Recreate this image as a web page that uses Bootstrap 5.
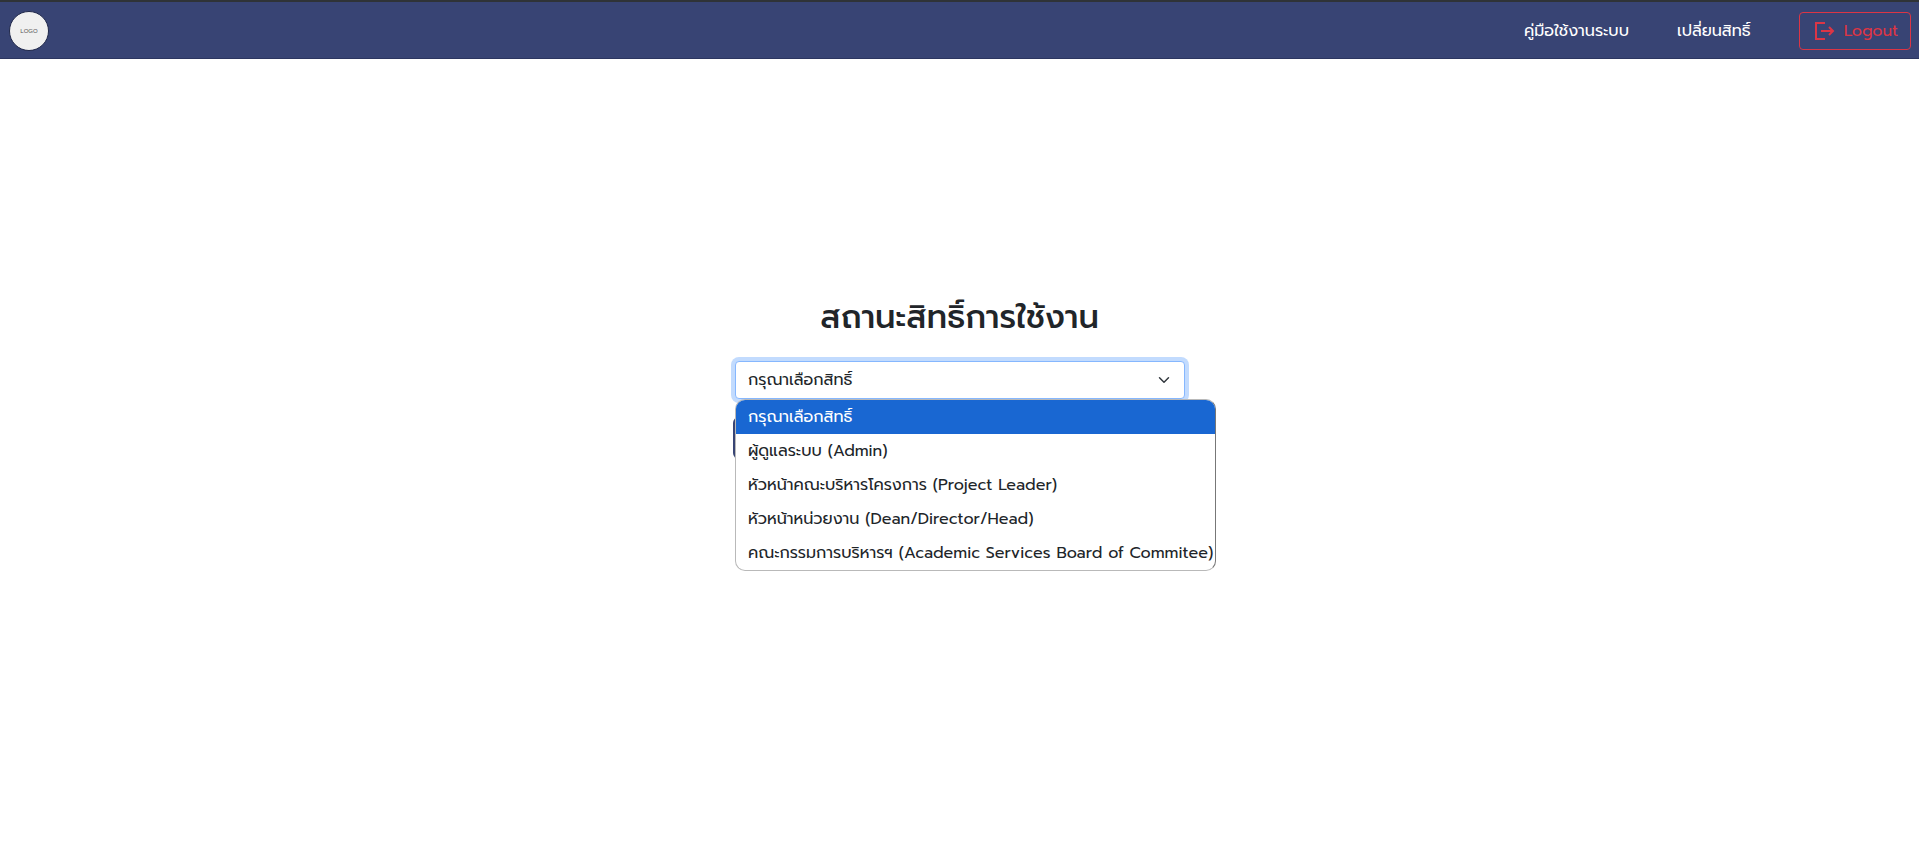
<!DOCTYPE html>
<html lang="th">
<head>
<meta charset="utf-8">
<meta name="viewport" content="width=device-width, initial-scale=1">
<title>สถานะสิทธิ์การใช้งาน</title>
<link href="https://cdn.jsdelivr.net/npm/bootstrap@5.3.0/dist/css/bootstrap.min.css" rel="stylesheet">
<style>
  body { font-family: Prompt, "Noto Sans", "Noto Sans Thai", sans-serif; }
  .topbar { background: #384474; border-top: 2px solid #2f3337; border-bottom: 1px solid #2c3660; padding: 9px 8px 7px 9px; }
  .logo-link { width: 40px; height: 40px; background: #f0f0f0; border: 1px solid #20284a; color: #555; font: 6px "Liberation Sans", sans-serif; }
  .top-link { color: #fff; }
  .menu-gap { gap: 48px; }
  .logout { padding: 6px 12px; gap: 8px; border-radius: 4px; }
  .role-area { padding-top: 240px; }
  .role-form { width: 453px; }
  .role-title { font-size: 32px; line-height: 38px; margin-bottom: 24px; }
  .role-field { margin: 0 1px 0 2px; }
  .role-select { border-radius: 4px; border-color: #86b7fe; box-shadow: 0 0 0 4px #c2dbfe; }
  .submit-btn { height: 42px; background: #384474; margin-top: 18px; }
  .submit-btn:hover { background: #2c3660; }
  .role-menu { top: 100%; left: 0; width: 481px; border: 1px solid #b9b9b9; border-right-color: #777; border-radius: 10px; z-index: 5; }
  .role-menu li { height: 34px; line-height: 34px; padding-left: 12px; white-space: nowrap; }
  .role-menu .picked { background: #1967d2; color: #fff; }
</style>
</head>
<body class="bg-white d-flex flex-column min-vh-100">
<nav class="topbar d-flex align-items-center justify-content-between">
  <a href="#" class="logo-link rounded-circle d-flex align-items-center justify-content-center text-decoration-none">LOGO</a>
  <div class="menu-gap d-flex align-items-center">
    <a href="#" class="top-link text-decoration-none">คู่มือใช้งานระบบ</a>
    <a href="#" class="top-link text-decoration-none">เปลี่ยนสิทธิ์</a>
    <button type="button" class="logout btn btn-outline-danger d-flex align-items-center">
      <svg width="24" height="24" viewBox="0 0 24 24" fill="none" stroke="currentColor" stroke-width="2" aria-hidden="true"><path d="M13 4H4v16h9M9 12h12M17 8l4 4-4 4"/></svg>
      Logout
    </button>
  </div>
</nav>
<main class="role-area flex-grow-1 d-flex justify-content-center">
  <form class="role-form">
    <h2 class="role-title text-center fw-medium"><label for="role">สถานะสิทธิ์การใช้งาน</label></h2>
    <div class="role-field position-relative">
      <select id="role" class="role-select form-select"><option>กรุณาเลือกสิทธิ์</option></select>
      <ul class="role-menu position-absolute list-unstyled mb-0 bg-white overflow-hidden" role="listbox">
        <li class="picked" role="option" aria-selected="true">กรุณาเลือกสิทธิ์</li>
        <li role="option">ผู้ดูแลระบบ (Admin)</li>
        <li role="option">หัวหน้าคณะบริหารโครงการ (Project Leader)</li>
        <li role="option">หัวหน้าหน่วยงาน (Dean/Director/Head)</li>
        <li role="option">คณะกรรมการบริหารฯ (Academic Services Board of Commitee)</li>
      </ul>
    </div>
    <button type="submit" class="submit-btn btn w-100"></button>
  </form>
</main>
<script src="https://cdn.jsdelivr.net/npm/bootstrap@5.3.0/dist/js/bootstrap.bundle.min.js"></script>
</body>
</html>
